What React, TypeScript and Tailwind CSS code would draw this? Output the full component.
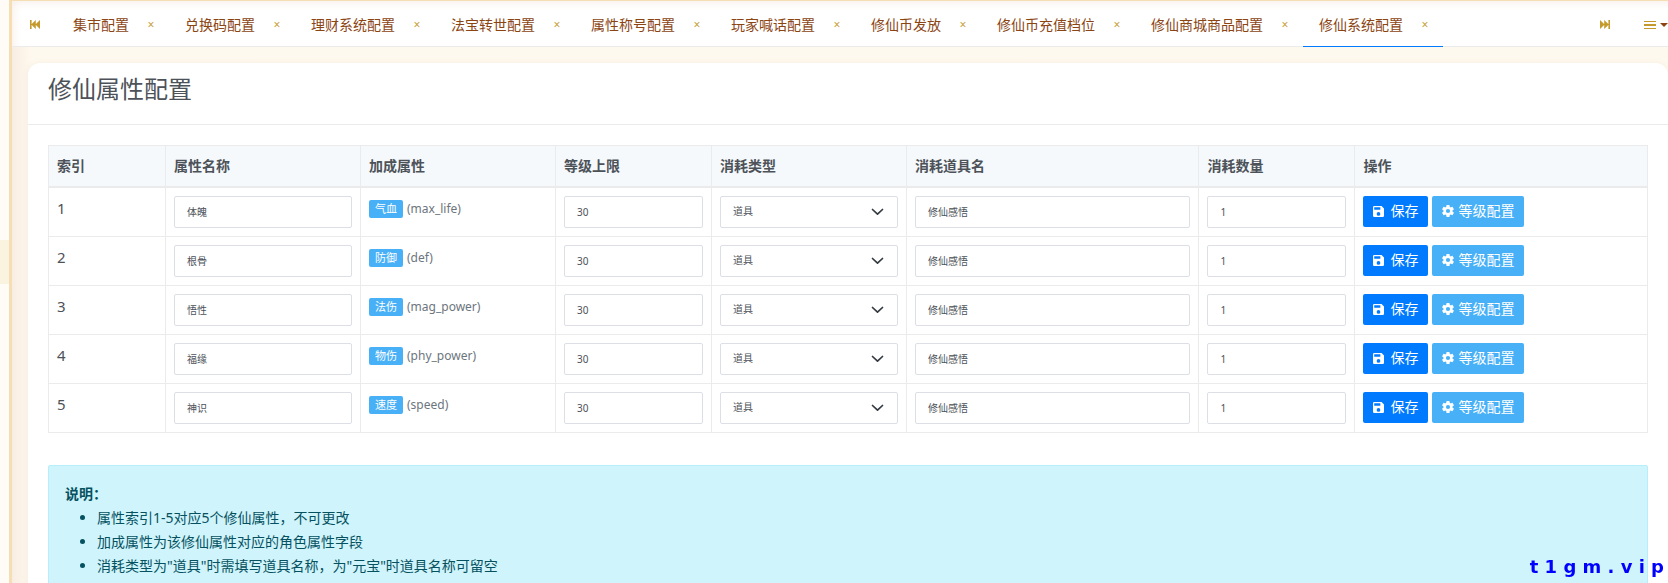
import { useState } from "react";

type AttributeRow = {
  id: number;
  name: string;
  label: string;
  field: string;
};

const tabs = [
  "集市配置",
  "兑换码配置",
  "理财系统配置",
  "法宝转世配置",
  "属性称号配置",
  "玩家喊话配置",
  "修仙币发放",
  "修仙币充值档位",
  "修仙商城商品配置",
  "修仙系统配置",
];

const columns = [
  { title: "索引", width: "w-[6%]" },
  { title: "属性名称", width: "w-[10%]" },
  { title: "加成属性", width: "w-[10%]" },
  { title: "等级上限", width: "w-[8%]" },
  { title: "消耗类型", width: "w-[10%]" },
  { title: "消耗道具名", width: "w-[15%]" },
  { title: "消耗数量", width: "w-[8%]" },
  { title: "操作", width: "w-[15%]" },
];

const rows: AttributeRow[] = [
  { id: 1, name: "体魄", label: "气血", field: "max_life" },
  { id: 2, name: "根骨", label: "防御", field: "def" },
  { id: 3, name: "悟性", label: "法伤", field: "mag_power" },
  { id: 4, name: "福缘", label: "物伤", field: "phy_power" },
  { id: 5, name: "神识", label: "速度", field: "speed" },
];

const notes = [
  "属性索引1-5对应5个修仙属性，不可更改",
  "加成属性为该修仙属性对应的角色属性字段",
  '消耗类型为"道具"时需填写道具名称，为"元宝"时道具名称可留空',
];

const fieldClass =
  "block h-8 w-full rounded-[2px] border border-[#dcdfe6] bg-white px-3 text-[10px] text-[#4d5259] outline-none focus:border-[#48b0f7]";
const cellClass = "border border-[#ebebeb] p-2 align-top";

function SkipIcon({ flip }: { flip?: boolean }) {
  return (
    <svg viewBox="0 0 10 9" className={`h-[9px] w-[10px] fill-[#c49a2c] ${flip ? "rotate-180" : ""}`} aria-hidden="true">
      <path d="M0 0h1.600v9H0zM5.800 0v9L1.200 4.500zM10 0v9L5.400 4.500z" />
    </svg>
  );
}

function SaveIcon() {
  return (
    <svg viewBox="3 3 18 18" className="size-[11px] fill-current" aria-hidden="true">
      <path d="M15 9H5V5h10M12 19a3 3 0 0 1-3-3 3 3 0 0 1 3-3 3 3 0 0 1 3 3 3 3 0 0 1-3 3M17 3H5a2 2 0 0 0-2 2v14a2 2 0 0 0 2 2h14a2 2 0 0 0 2-2V7l-4-4z" />
    </svg>
  );
}

function CogIcon() {
  return (
    <svg viewBox="2 2 20 20" className="size-3 fill-current" aria-hidden="true">
      <path d="M12 15.5A3.5 3.5 0 0 1 8.500 12 3.500 3.500 0 0 1 12 8.500a3.500 3.500 0 0 1 3.500 3.500 3.500 3.500 0 0 1-3.500 3.500m7.430-2.530c.040-.320.070-.640.070-.970s-.030-.660-.070-1l2.110-1.630c.190-.150.240-.420.120-.640l-2-3.460c-.120-.220-.390-.310-.610-.220l-2.490 1c-.520-.390-1.060-.730-1.690-.980l-.370-2.650A.506.506 0 0 0 14 2h-4c-.250 0-.460.180-.500.420l-.370 2.650c-.630.250-1.170.590-1.690.980l-2.490-1c-.220-.090-.490 0-.610.220l-2 3.460c-.130.220-.070.490.120.640L4.570 11c-.040.340-.070.670-.070 1s.030.650.070.970l-2.110 1.660c-.190.150-.250.420-.120.640l2 3.460c.120.220.390.300.610.220l2.490-1.010c.520.400 1.060.740 1.690.990l.370 2.650c.040.240.250.420.500.420h4c.250 0 .460-.180.500-.420l.370-2.650c.630-.260 1.170-.590 1.690-.990l2.490 1.010c.220.080.490 0 .610-.220l2-3.460c.120-.220.070-.490-.120-.640z" />
    </svg>
  );
}

function TabBar() {
  const [active, setActive] = useState("修仙系统配置");

  return (
    <header className="flex h-[46px] border-b border-[#ebebeb] bg-white pt-0.5 shadow-[inset_8px_8px_8px_-6px_#f7efe9]">
      <button type="button" aria-label="向左滚动" className="flex w-[45px] shrink-0 items-center justify-center">
        <SkipIcon />
      </button>
      <nav className="-mb-px flex min-w-0 flex-1 overflow-hidden">
        {tabs.map((tab) => (
          <div
            key={tab}
            className={`flex shrink-0 items-center pr-3.5 pl-4 ${
              active === tab ? "border-b border-[#007bff]" : "border-b border-transparent"
            }`}
          >
            <button type="button" onClick={() => setActive(tab)} className="text-sm whitespace-nowrap text-[#8b4513]">
              {tab}
            </button>
            <button type="button" aria-label={`关闭${tab}`} className="ml-[18px] flex w-2 justify-center text-xs text-[#c9a13b]">
              ×
            </button>
          </div>
        ))}
      </nav>
      <button type="button" aria-label="向右滚动" className="flex w-12 shrink-0 items-center justify-center">
        <SkipIcon flip />
      </button>
      <button type="button" aria-label="标签操作" className="flex w-[39px] shrink-0 items-center justify-end gap-1 overflow-hidden">
        <svg viewBox="0 0 12 8" className="h-2 w-3 shrink-0 fill-[#c49a2c]" aria-hidden="true">
          <path d="M0 0h12v1H0zM0 3h12v2H0zM0 7h12v1H0z" />
        </svg>
        <svg viewBox="0 0 8 4" className="h-1 w-2 shrink-0 fill-[#8b4513]" aria-hidden="true">
          <path d="M0 0h8L4 4z" />
        </svg>
      </button>
    </header>
  );
}

function AttributeTable() {
  return (
    <table className="w-full table-fixed border-collapse border border-[#ebebeb]">
      <thead>
        <tr className="bg-[#f5f9fc]">
          {columns.map((column) => (
            <th
              key={column.title}
              scope="col"
              className={`${column.width} h-[41px] border border-b-2 border-[#ebebeb] px-2 text-left text-sm font-bold`}
            >
              {column.title}
            </th>
          ))}
        </tr>
      </thead>
      <tbody>
        {rows.map((row) => (
          <tr key={row.id}>
            <td className={`${cellClass} text-[15px] leading-6`}>{row.id}</td>
            <td className={cellClass}>
              <input aria-label="属性名称" defaultValue={row.name} className={fieldClass} />
            </td>
            <td className={cellClass}>
              <div className="flex h-[26px] items-center gap-1">
                <span className="rounded-[2px] bg-[#48b0f7] px-[6px] text-[11px] leading-[18px] text-white">{row.label}</span>
                <span className="text-xs text-[#6c757d]">({row.field})</span>
              </div>
            </td>
            <td className={cellClass}>
              <input aria-label="等级上限" defaultValue="30" className={fieldClass} />
            </td>
            <td className={cellClass}>
              <div className="relative">
                <select aria-label="消耗类型" defaultValue="道具" className={`${fieldClass} appearance-none`}>
                  <option>道具</option>
                  <option>元宝</option>
                </select>
                <svg
                  viewBox="0 0 16 16"
                  className="pointer-events-none absolute top-2 right-3 size-4 fill-none stroke-[#343a40]"
                  aria-hidden="true"
                >
                  <path d="M2.500 5.500L7.500 10.200l5-4.700" strokeWidth="1.700" strokeLinecap="round" strokeLinejoin="round" />
                </svg>
              </div>
            </td>
            <td className={cellClass}>
              <input aria-label="消耗道具名" defaultValue="修仙感悟" className={fieldClass} />
            </td>
            <td className={cellClass}>
              <input aria-label="消耗数量" defaultValue="1" className={fieldClass} />
            </td>
            <td className={cellClass}>
              <div className="flex gap-1 text-sm text-white">
                <button type="button" className="flex h-[31px] items-center gap-[6px] rounded-[2px] bg-[#007bff] px-[10px]">
                  <SaveIcon />
                  保存
                </button>
                <button type="button" className="flex h-[31px] items-center gap-1 rounded-[2px] bg-[#48b0f7] px-[10px]">
                  <CogIcon />
                  等级配置
                </button>
              </div>
            </td>
          </tr>
        ))}
      </tbody>
    </table>
  );
}

export default function App() {
  return (
    <div className="flex h-screen overflow-hidden font-['Noto_Sans','Noto_Sans_CJK_SC',sans-serif] text-[#4d5259]">
      <aside className="w-[9px] shrink-0 bg-[#fffcf7] pt-60">
        <div className="h-11 bg-[#faf3e0]" />
      </aside>
      <div className="flex min-w-0 flex-1 flex-col border-t border-l-3 border-[#f5deb3] bg-[#fef9ee]">
        <TabBar />
        <main className="min-h-0 flex-1 bg-linear-to-r from-[#f9ede3] to-[#fef9ee] to-[20px] pt-4 pl-4">
          <section className="rounded-t-xl bg-white shadow-[0_0_6px_rgba(139,69,19,0.06)]">
            <div className="h-[62px] border-b border-[#ebebeb] px-5 pt-2">
              <h1 className="text-2xl leading-9">修仙属性配置</h1>
            </div>
            <div className="px-5 pt-5">
              <AttributeTable />
              <div className="mt-8 rounded-[2px] border border-[#b6effb] bg-[#cff4fc] p-4 text-sm leading-6 text-[#055160]">
                <strong>说明：</strong>
                <ul className="list-disc pl-8">
                  {notes.map((note) => (
                    <li key={note}>{note}</li>
                  ))}
                </ul>
              </div>
            </div>
          </section>
        </main>
      </div>
      <p className="fixed right-1 bottom-1 font-['DejaVu_Sans',sans-serif] text-lg leading-6 font-bold text-[#0000ff]">
        t 1 g m . v i p
      </p>
    </div>
  );
}
